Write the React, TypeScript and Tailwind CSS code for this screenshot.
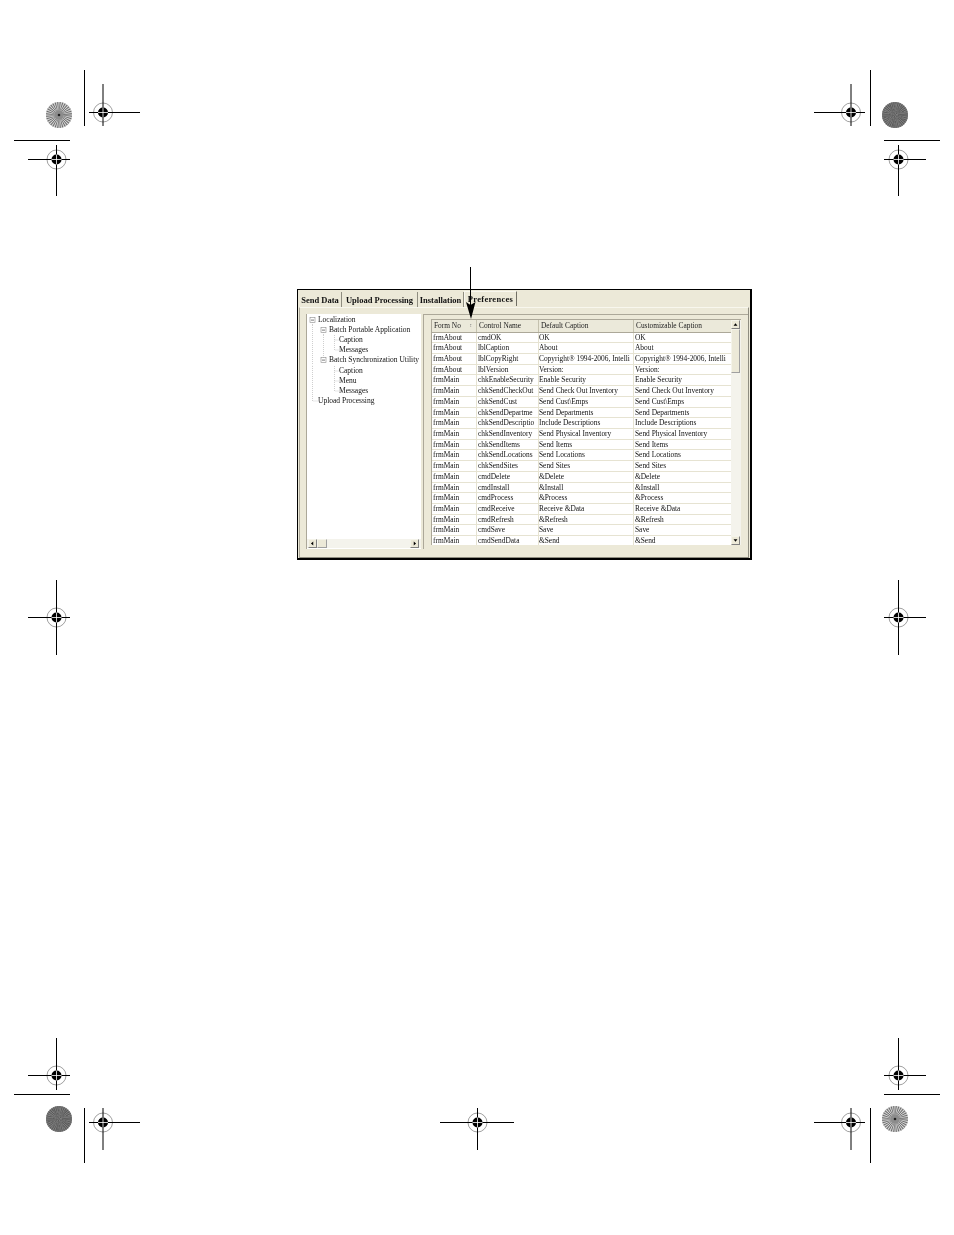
import React from 'react';

const rows = [
  ['frmAbout', 'cmdOK', 'OK', 'OK'],
  ['frmAbout', 'lblCaption', 'About', 'About'],
  ['frmAbout', 'lblCopyRight', 'Copyright® 1994-2006, Intelli', 'Copyright® 1994-2006, Intelli'],
  ['frmAbout', 'lblVersion', 'Version:', 'Version:'],
  ['frmMain', 'chkEnableSecurity', 'Enable Security', 'Enable Security'],
  ['frmMain', 'chkSendCheckOut', 'Send Check Out Inventory', 'Send Check Out Inventory'],
  ['frmMain', 'chkSendCust', 'Send Cust\\Emps', 'Send Cust\\Emps'],
  ['frmMain', 'chkSendDepartme', 'Send Departments', 'Send Departments'],
  ['frmMain', 'chkSendDescriptio', 'Include Descriptions', 'Include Descriptions'],
  ['frmMain', 'chkSendInventory', 'Send Physical Inventory', 'Send Physical Inventory'],
  ['frmMain', 'chkSendItems', 'Send Items', 'Send Items'],
  ['frmMain', 'chkSendLocations', 'Send Locations', 'Send Locations'],
  ['frmMain', 'chkSendSites', 'Send Sites', 'Send Sites'],
  ['frmMain', 'cmdDelete', '&Delete', '&Delete'],
  ['frmMain', 'cmdInstall', '&Install', '&Install'],
  ['frmMain', 'cmdProcess', '&Process', '&Process'],
  ['frmMain', 'cmdReceive', 'Receive &Data', 'Receive &Data'],
  ['frmMain', 'cmdRefresh', '&Refresh', '&Refresh'],
  ['frmMain', 'cmdSave', 'Save', 'Save'],
  ['frmMain', 'cmdSendData', '&Send', '&Send'],
];

// x is measured from the left edge of the tree panel
const tree = [
  { label: 'Localization', width: 'w-[12px]', view: 12, guides: 'M5.5 5V10.2', box: 5.5 },
  { label: 'Batch Portable Application', width: 'w-[23px]', view: 23, guides: 'M5.5 0V10.2M16.5 5V10.2', box: 16.5 },
  { label: 'Caption', width: 'w-[33px]', view: 33, guides: 'M5.5 0V10.2M16.5 0V10.2M27.5 0V10.2M27.5 5H32' },
  { label: 'Messages', width: 'w-[33px]', view: 33, guides: 'M5.5 0V10.2M16.5 0V10.2M27.5 0V5H32' },
  { label: 'Batch Synchronization Utility', width: 'w-[23px]', view: 23, guides: 'M5.5 0V10.2M16.5 0V5', box: 16.5 },
  { label: 'Caption', width: 'w-[33px]', view: 33, guides: 'M5.5 0V10.2M27.5 0V10.2M27.5 5H32' },
  { label: 'Menu', width: 'w-[33px]', view: 33, guides: 'M5.5 0V10.2M27.5 0V10.2M27.5 5H32' },
  { label: 'Messages', width: 'w-[33px]', view: 33, guides: 'M5.5 0V10.2M27.5 0V5H32' },
  { label: 'Upload Processing', width: 'w-[12px]', view: 12, guides: 'M5.5 0V5H11' },
];

function Crosshair({ x, y, h, v }: { x: number; y: number; h: [number, number]; v: [number, number] }) {
  return (
    <g>
      <circle cx={x} cy={y} r={9.5} fill="none" stroke="#777" strokeWidth={0.7} />
      <path d={`M${x} ${y}m-5 0a5 5 0 0 1 10 0a5 5 0 0 1-10 0z`} fill="#000" />
      <path d={`M${h[0]} ${y}H${h[1]}M${x} ${v[0]}V${v[1]}`} stroke="#000" strokeWidth={1} />
      <path d={`M${x - 5} ${y}H${x + 5}M${x} ${y - 5}V${y + 5}`} stroke="#fff" strokeWidth={0.8} />
    </g>
  );
}

function Wheel({ x, y, dark }: { x: number; y: number; dark?: boolean }) {
  const spokes = Array.from({ length: dark ? 72 : 64 });
  return (
    <g>
      <circle cx={x} cy={y} r={13} fill={dark ? '#6c6c6c' : '#a8a8a8'} />
      {spokes.map((_, i) => {
        const a = (i / spokes.length) * Math.PI * 2;
        const inner = dark ? 1 + (i % 7) * 1.7 : 3;
        return (
          <line
            key={i}
            x1={x + Math.cos(a) * inner}
            y1={y + Math.sin(a) * inner}
            x2={x + Math.cos(a) * 13}
            y2={y + Math.sin(a) * 13}
            stroke={dark ? (i % 2 ? '#505050' : '#8a8a8a') : i % 2 ? '#555' : '#e8e8e8'}
            strokeWidth={0.7}
          />
        );
      })}
      {!dark && <circle cx={x} cy={y} r={4.5} fill="#8c8c8c" />}
      {!dark && <circle cx={x} cy={y} r={1.3} fill="#222" />}
    </g>
  );
}

function PrintMarks() {
  return (
    <svg className="absolute inset-0 pointer-events-none" width={954} height={1235} viewBox="0 0 954 1235">
      <path
        d="M84.5 70V126M870.5 70V126M14 140.5H70M884 140.5H940M14 1094.5H70M884 1094.5H940M84.5 1108V1163M870.5 1108V1163"
        stroke="#000"
        strokeWidth={1}
      />
      <Wheel x={59} y={115} />
      <Wheel x={895} y={115} dark />
      <Wheel x={59} y={1119} dark />
      <Wheel x={895} y={1119} />
      <Crosshair x={103} y={112.5} h={[89, 140]} v={[84, 126]} />
      <Crosshair x={851} y={112.5} h={[814, 865]} v={[84, 126]} />
      <Crosshair x={56.5} y={159.5} h={[28, 70]} v={[145, 196]} />
      <Crosshair x={898.5} y={159.5} h={[884, 926]} v={[145, 196]} />
      <Crosshair x={56.5} y={617.5} h={[28, 70]} v={[580, 655]} />
      <Crosshair x={898.5} y={617.5} h={[884, 926]} v={[580, 655]} />
      <Crosshair x={56.5} y={1075.5} h={[28, 70]} v={[1038, 1090]} />
      <Crosshair x={898.5} y={1075.5} h={[884, 926]} v={[1038, 1090]} />
      <Crosshair x={103} y={1122.5} h={[89, 140]} v={[1108, 1150]} />
      <Crosshair x={477.5} y={1122.5} h={[440, 514]} v={[1108, 1150]} />
      <Crosshair x={851} y={1122.5} h={[814, 865]} v={[1108, 1150]} />
      {/* callout arrow */}
      <path d="M470.5 267V306" stroke="#000" strokeWidth={1} />
      <path d="M466 302L470.5 305L475.5 302L471 319Z" fill="#000" />
    </svg>
  );
}

function Arrow({ d }: { d: string }) {
  return (
    <svg width="9" height="9" viewBox="0 0 9 9">
      <path d={d} fill="#000" />
    </svg>
  );
}

function ScrollButton({ d }: { d: string }) {
  return (
    <div className="flex h-[9px] w-[9px] shrink-0 items-center justify-center border border-[#f5f4ea] border-r-[#808080] border-b-[#808080] bg-[#ece9d8]">
      <Arrow d={d} />
    </div>
  );
}

function TreePanel() {
  return (
    <div className="flex h-[235px] w-[115px] shrink-0 flex-col border-l border-[#aca899] bg-white">
      <div className="flex-1 pt-[0.6px]">
        {tree.map((item, i) => (
          <div key={i} className="flex h-[10.2px] items-center whitespace-nowrap text-[7.5px] leading-[10px] text-[#111]">
            <svg className={`${item.width} -mr-[1px] h-[10.2px] shrink-0`} viewBox={`0 0 ${item.view} 10.2`}>
              <path d={item.guides} stroke="#b8b8b8" strokeWidth={0.7} strokeDasharray="1 1" fill="none" />
              {item.box !== undefined && (
                <g>
                  <rect x={item.box - 2.5} y={2.6} width={5} height={5} fill="#fff" stroke="#8a8a8a" strokeWidth={0.6} />
                  <path d={`M${item.box - 1.5} 5.1H${item.box + 1.5}`} stroke="#222" strokeWidth={0.6} />
                </g>
              )}
            </svg>
            <span>{item.label}</span>
          </div>
        ))}
      </div>
      <div className="mb-[1px] flex h-[9px] items-center bg-[#f4f3ec] bg-[radial-gradient(#d8d6c8_0.6px,transparent_0.6px)] bg-[size:4px_4px] pr-[2px] pl-[1px]">
        <ScrollButton d="M5.5 2V7L2.5 4.5Z" />
        <div className="h-[9px] w-[10px] border border-[#f5f4ea] border-r-[#a0a0a0] border-b-[#a0a0a0] bg-[#ece9d8]" />
        <div className="flex-1" />
        <ScrollButton d="M3.5 2V7L6.5 4.5Z" />
      </div>
    </div>
  );
}

function DataGrid() {
  const cols = 'grid grid-cols-[45px_62px_95px_97px]';
  return (
    <div className="flex h-[226px] w-[310px] overflow-hidden border-t border-l border-[#aca899] bg-white">
      <div className="w-[299px] shrink-0">
        <div className={`${cols} h-[12.5px] border-b border-[#aca899] bg-[#ebe9da] text-[7.4px] leading-[11px] text-[#222]`}>
          <div className="flex justify-between border-r border-[#c4c1ae] pr-[4px] pl-[2px]">
            <span>Form No</span>
            <span className="text-[5px] text-[#777]">↕</span>
          </div>
          <div className="border-r border-[#c4c1ae] pl-[2px]">Control Name</div>
          <div className="border-r border-[#c4c1ae] pl-[2px]">Default Caption</div>
          <div className="pl-[2px]">Customizable Caption</div>
        </div>
        {rows.map((row, i) => (
          <div key={i} className={`${cols} h-[10.72px] border-b border-[#e6e3d2] text-[7.4px] leading-[10px] text-[#111]`}>
            {row.map((cell, j) => (
              <div key={j} className={`overflow-hidden whitespace-nowrap ${j === 2 ? 'pl-0' : 'pl-[1px]'} ${j < 3 ? 'border-r border-[#e6e3d2]' : ''}`}>
                {cell}
              </div>
            ))}
          </div>
        ))}
      </div>
      <div className="flex w-[10px] flex-col bg-[#f4f3ec] bg-[radial-gradient(#d8d6c8_0.6px,transparent_0.6px)] bg-[size:4px_4px]">
        <ScrollButton d="M4.5 3L2 6H7Z" />
        <div className="h-[44px] w-[9px] border border-[#f5f4ea] border-r-[#a0a0a0] border-b-[#a0a0a0] bg-[#ece9d8]" />
        <div className="flex-1" />
        <ScrollButton d="M4.5 6L2 3H7Z" />
      </div>
    </div>
  );
}

function Tab({ label, active, width }: { label: string; active?: boolean; width: string }) {
  return (
    <div
      className={`${width} flex h-[15px] items-center justify-center whitespace-nowrap text-[8.5px] leading-[10px] font-bold text-[#111] ${
        active
          ? 'mb-[1px] border border-b-0 border-[#f8f7ee] border-r-[#716f64] tracking-[0.3px]'
          : 'border-r border-[#8f8d80] pt-[1px]'
      }`}
    >
      {label}
    </div>
  );
}

export default function App() {
  return (
    <div className="relative h-[1235px] w-[954px] overflow-hidden bg-white pt-[289px] pl-[297px] font-['Liberation_Serif',serif]">
      <div className="h-[271px] w-[455px] border border-r-2 border-b-2 border-black bg-[#ece9d8] p-[1px] blur-[0.3px]">
        <div className="flex h-[16px] items-end">
          <Tab label="Send Data" width="w-[43px]" />
          <Tab label="Upload Processing" width="w-[76px]" />
          <Tab label="Installation" width="w-[46px]" />
          <Tab label="Preferences" width="w-[53px]" active />
        </div>
        <div className="h-[251px] border border-[#aca899] border-t-[#f8f7ee] border-r-[#8f8d80] border-b-[#8f8d80] pt-[6px] pl-[6px]">
          <div className="flex gap-[2px]">
            <TreePanel />
            <div className="h-[235px] flex-1 border-t border-l border-[#aca899] pt-[4px] pl-[7px]">
              <DataGrid />
            </div>
          </div>
        </div>
      </div>
      <PrintMarks />
    </div>
  );
}
